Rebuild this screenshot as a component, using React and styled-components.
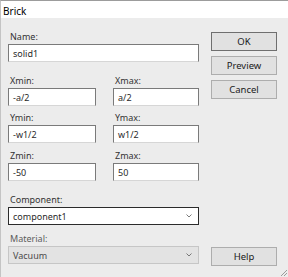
import React from 'react';
import styled, { createGlobalStyle } from 'styled-components';

const GlobalStyle = createGlobalStyle`
	html, body {
		margin: 0;
		padding: 0;
		background: #ececec;
	}
	* {
		box-sizing: border-box;
	}
`;

const Window = styled.div`
	position: relative;
	width: 288px;
	height: 277px;
	background: #ececec;
	border-top: 1px solid #9c9c9c;
	border-left: 1px solid #c4c4c4;
	font-family: 'Noto Sans', 'DejaVu Sans', sans-serif;
	font-size: 9px;
	color: #1a1a1a;
	overflow: hidden;
`;

const TitleBar = styled.div`
	height: 17px;
	background: #ffffff;
	padding-left: 2px;
	display: flex;
	align-items: center;
	font-size: 10px;
	color: #000;
	padding-top: 2px;
`;

const Body = styled.div`
	display: grid;
	grid-template-columns: 191px 66px;
	column-gap: 12px;
	padding: 0 0 0 7px;
`;

const LeftColumn = styled.div`
	display: flex;
	flex-direction: column;
	padding-top: 13px;
`;

const Field = styled.div`
	display: flex;
	flex-direction: column;
	margin-top: ${(p) => p.$top || 0}px;
`;

const Label = styled.label`
	height: 12px;
	line-height: 12px;
	margin-bottom: 1px;
	padding-left: 2px;
	color: ${(p) => (p.$disabled ? '#5c5c5c' : '#333333')};
`;

const Input = styled.div`
	height: 18px;
	background: #ffffff;
	border: 1px solid #7a7a7a;
	border-bottom-color: #d6d6d6;
	padding-left: 4px;
	display: flex;
	align-items: center;
	color: #2a2a2a;
`;

const Pair = styled.div`
	display: grid;
	grid-template-columns: 88px 86px;
	column-gap: 17px;
	margin-top: ${(p) => p.$top || 0}px;
`;

const Select = styled.div`
	height: 18px;
	background: ${(p) => (p.$disabled ? '#e3e3e3' : '#ffffff')};
	border: 1px solid ${(p) => (p.$disabled ? '#c6c6c6' : '#2b2b2b')};
	display: flex;
	align-items: center;
	justify-content: space-between;
	padding: 0 6px 0 4px;
	color: ${(p) => (p.$disabled ? '#4a4a4a' : '#2a2a2a')};
`;

const RightColumn = styled.div`
	display: flex;
	flex-direction: column;
	padding-top: 14px;
`;

const Button = styled.div`
	height: 19px;
	background: #e1e1e1;
	border: 1px solid ${(p) => (p.$default ? '#6f6f6f' : '#adadad')};
	display: flex;
	align-items: center;
	justify-content: center;
	font-size: 9.5px;
	color: #1a1a1a;
	margin-top: ${(p) => p.$top || 0}px;
`;

const Grip = styled.svg`
	position: absolute;
	right: 0;
	bottom: 0;
`;

const Chevron = () => (
	<svg width="6" height="4" viewBox="0 0 6 4">
		<path d="M0.5 0.5 L3 3 L5.5 0.5" fill="none" stroke="#6b6b6b" strokeWidth="0.9" />
	</svg>
);

const App = () => {
	return (
		<>
			<GlobalStyle />
			<Window>
				<TitleBar>Brick</TitleBar>
				<Body>
					<LeftColumn>
						<Field>
							<Label>Name:</Label>
							<Input>solid1</Input>
						</Field>
						<Pair $top={13}>
							<Field>
								<Label>Xmin:</Label>
								<Input>-a/2</Input>
							</Field>
							<Field>
								<Label>Xmax:</Label>
								<Input>a/2</Input>
							</Field>
						</Pair>
						<Pair $top={6}>
							<Field>
								<Label>Ymin:</Label>
								<Input>-w1/2</Input>
							</Field>
							<Field>
								<Label>Ymax:</Label>
								<Input>w1/2</Input>
							</Field>
						</Pair>
						<Pair $top={7}>
							<Field>
								<Label>Zmin:</Label>
								<Input>-50</Input>
							</Field>
							<Field>
								<Label>Zmax:</Label>
								<Input>50</Input>
							</Field>
						</Pair>
						<Field $top={13}>
							<Label>Component:</Label>
							<Select>
								component1
								<Chevron />
							</Select>
						</Field>
						<Field $top={8}>
							<Label $disabled>Material:</Label>
							<Select $disabled>
								Vacuum
								<Chevron />
							</Select>
						</Field>
					</LeftColumn>
					<RightColumn>
						<Button $default>OK</Button>
						<Button $top={5}>Preview</Button>
						<Button $top={5}>Cancel</Button>
						<Button $top={148}>Help</Button>
					</RightColumn>
				</Body>
				<Grip width="9" height="9" viewBox="0 0 9 9">
					<path d="M8 2 L2 8 M8 5 L5 8" stroke="#9a9a9a" strokeWidth="1" />
				</Grip>
			</Window>
		</>
	);
};

export default App;
